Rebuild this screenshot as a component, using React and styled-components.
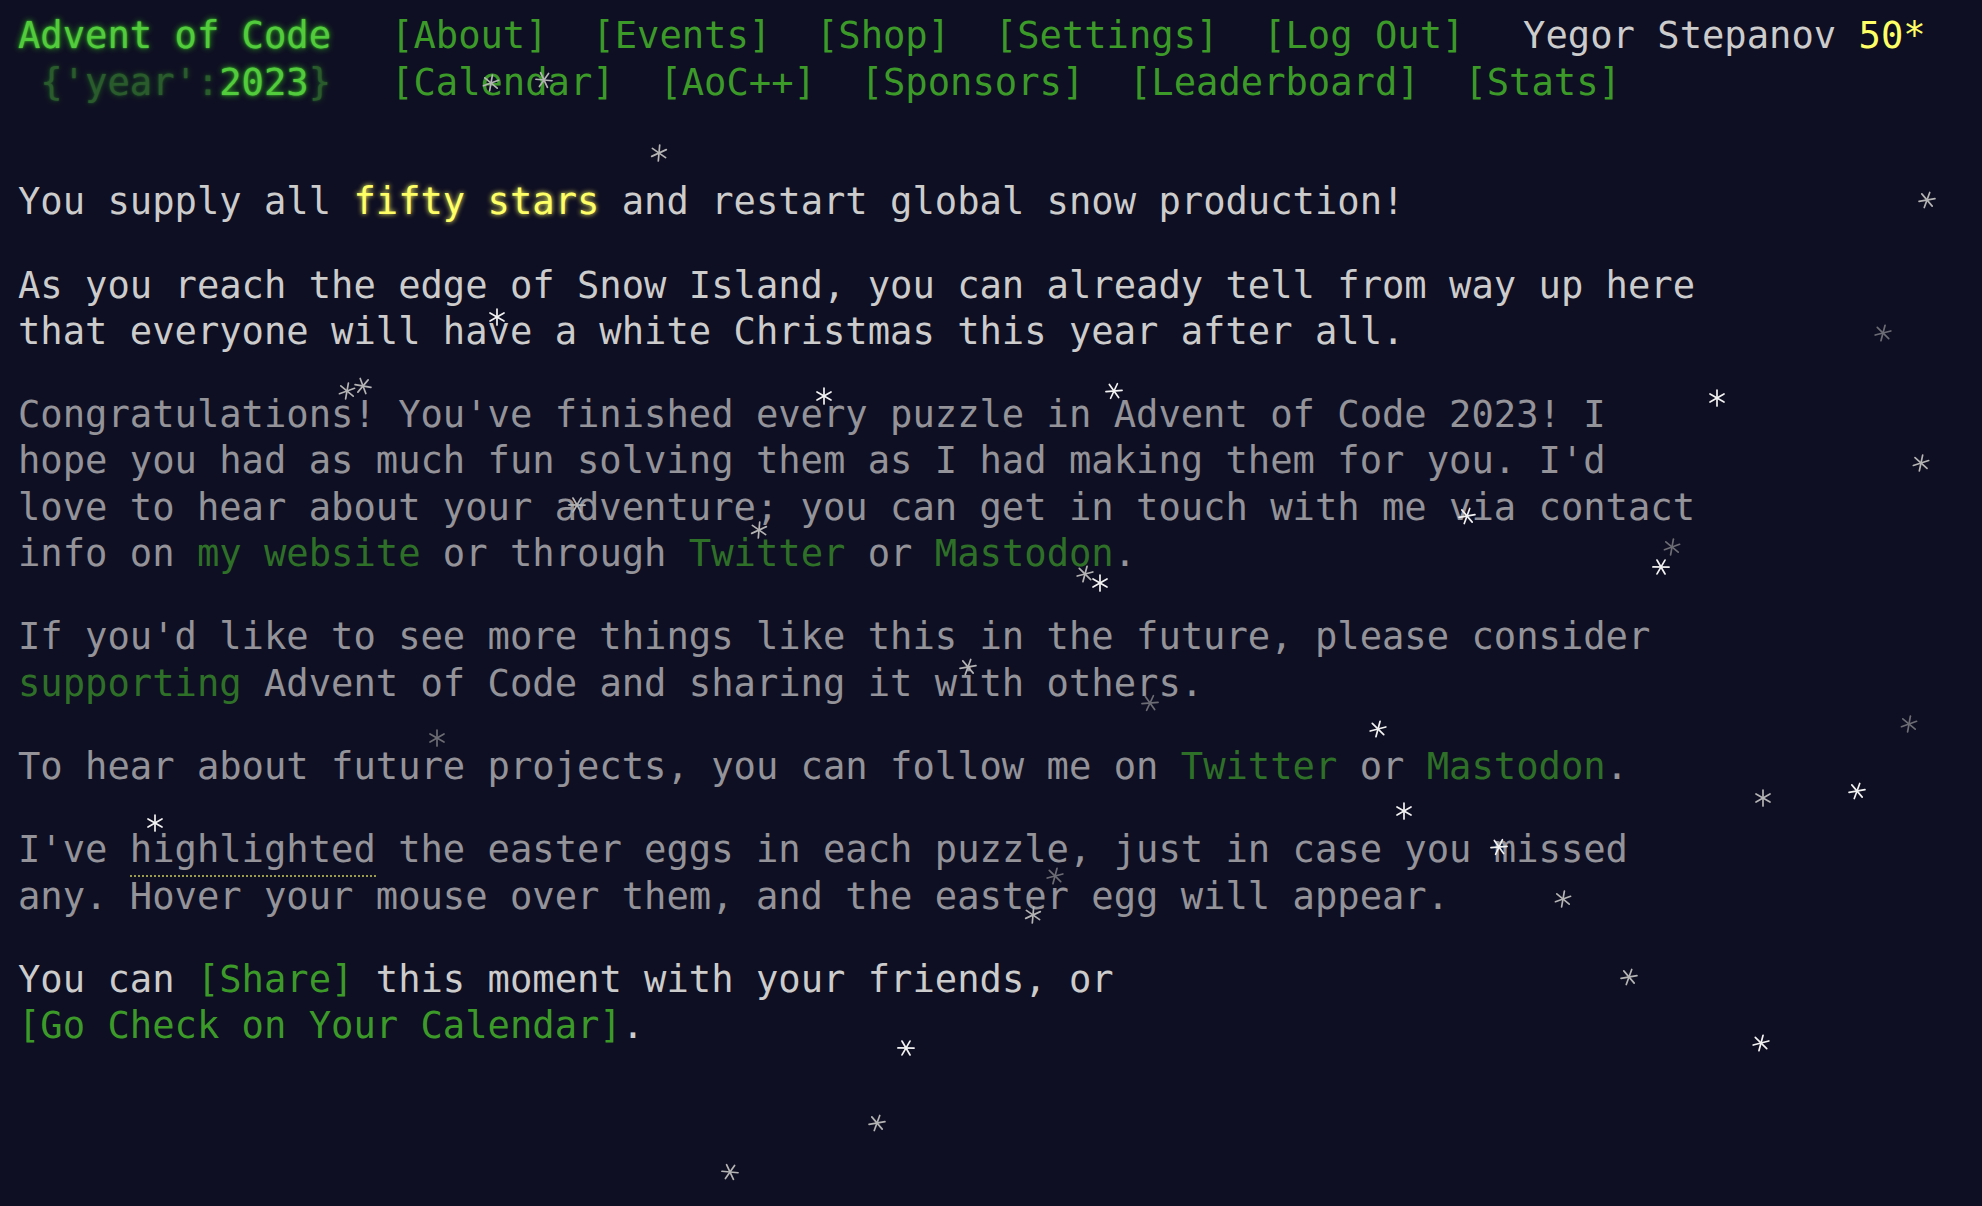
import React from "react";
import styled, { createGlobalStyle } from "styled-components";

const GlobalStyle = createGlobalStyle`
  html, body {
    margin: 0;
    background: #0f0f23;
  }
  body {
    font-family: "DejaVu Sans Mono", "Liberation Mono", monospace;
    font-size: 37.15px;
    color: #cccccc;
  }
`;

const SNOW = [
  [491, 83, "g", 10], [544, 80, "g", 35], [659, 153, "g", 5],
  [1927, 200, "g", 20], [497, 317, "w", 0], [1883, 333, "d", 15],
  [347, 391, "g", 10], [363, 386, "g", 40], [824, 396, "w", 0],
  [1114, 391, "w", 25], [1717, 398, "w", 0], [1921, 463, "g", 12],
  [577, 505, "g", 30], [759, 530, "g", 5], [1467, 516, "w", 20],
  [1672, 547, "d", 10], [1661, 567, "w", 30], [1085, 574, "g", 15],
  [1100, 583, "w", 0], [968, 667, "g", 20], [1150, 703, "d", 25],
  [437, 738, "d", 0], [1378, 729, "w", 15], [1909, 724, "d", 10],
  [1763, 798, "g", 0], [1857, 791, "w", 20], [1404, 811, "w", 0],
  [155, 823, "w", 0], [1499, 847, "w", 25], [1055, 876, "d", 15],
  [1033, 915, "g", 5], [1563, 899, "g", 10], [1629, 977, "g", 20],
  [906, 1048, "w", 30], [1761, 1043, "w", 15], [877, 1123, "g", 20],
  [730, 1172, "g", 35],
];

const SNOW_TONE = { w: "#f2f2f2", g: "#b4b4b4", d: "#6c6c74" };

const Flake = ({ x, y, tone, turn }) => (
  <FlakeBox style={{ left: x - 9, top: y - 9 }}>
    <svg width="18" height="18" viewBox="-9 -9 18 18">
      <g
        stroke={SNOW_TONE[tone]}
        strokeWidth="1.7"
        strokeLinecap="round"
        transform={`rotate(${turn})`}
      >
        <line x1="0" y1="-8" x2="0" y2="8" />
        <line x1="-7" y1="-4" x2="7" y2="4" />
        <line x1="-7" y1="4" x2="7" y2="-4" />
      </g>
    </svg>
  </FlakeBox>
);

const App = () => {
  return (
    <Page>
      <GlobalStyle />
      <Header>
        <Title>Advent of Code</Title>
        <Nav>
          <NavLink href="#">[About]</NavLink>
          <NavLink href="#">[Events]</NavLink>
          <NavLink href="#">[Shop]</NavLink>
          <NavLink href="#">[Settings]</NavLink>
          <NavLink href="#">[Log Out]</NavLink>
          <User>
            Yegor Stepanov <StarCount>50*</StarCount>
          </User>
        </Nav>
        <Title $end>
          <Faded>{"{'year':"}</Faded>2023<Faded>{"}"}</Faded>
        </Title>
        <Nav>
          <NavLink href="#">[Calendar]</NavLink>
          <NavLink href="#">[AoC++]</NavLink>
          <NavLink href="#">[Sponsors]</NavLink>
          <NavLink href="#">[Leaderboard]</NavLink>
          <NavLink href="#">[Stats]</NavLink>
        </Nav>
      </Header>

      <Main>
        <P>
          You supply all <Glow>fifty stars</Glow> and restart global snow
          production!
        </P>
        <P>
          As you reach the edge of Snow Island, you can already tell from way
          up here that everyone will have a white Christmas this year after
          all.
        </P>
        <P $dim>
          Congratulations! You've finished every puzzle in Advent of Code 2023!
          I hope you had as much fun solving them as I had making them for you.
          I'd love to hear about your adventure; you can get in touch with me
          via contact info on <Link href="#">my website</Link> or through{" "}
          <Link href="#">Twitter</Link> or <Link href="#">Mastodon</Link>.
        </P>
        <P $dim>
          If you'd like to see more things like this in the future, please
          consider <Link href="#">supporting</Link> Advent of Code and sharing
          it with others.
        </P>
        <P $dim>
          To hear about future projects, you can follow me on{" "}
          <Link href="#">Twitter</Link> or <Link href="#">Mastodon</Link>.
        </P>
        <P $dim>
          I've <Egg title="Hover">highlighted</Egg> the easter eggs in each
          puzzle, just in case you missed any. Hover your mouse over them, and
          the easter egg will appear.
        </P>
        <P>
          You can <Link href="#">[Share]</Link> this moment with your friends,
          or <Link href="#" $nowrap>[Go Check on Your Calendar]</Link>.
        </P>
      </Main>

      <Snow>
        {SNOW.map(([x, y, tone, turn], i) => (
          <Flake key={i} x={x} y={y} tone={tone} turn={turn} />
        ))}
      </Snow>
    </Page>
  );
};

const Page = styled.div`
  position: relative;
  min-height: 100vh;
  box-sizing: border-box;
  padding: 13px 18px 0;
  overflow: hidden;
`;

const Header = styled.header`
  display: grid;
  grid-template-columns: auto 1fr;
  column-gap: 60px;
  line-height: 46.5px;
  white-space: pre;
`;

const Title = styled.h1`
  margin: 0;
  font-size: inherit;
  font-weight: normal;
  justify-self: ${({ $end }) => ($end ? "end" : "start")};
  color: #52cc3c;
  text-shadow: 0 0 2px #3fbf2a, 0 0 6px #2fae1e;
`;

const Faded = styled.span`
  opacity: 0.4;
`;

const Nav = styled.nav`
  display: flex;
  gap: 2ch;
`;

const NavLink = styled.a`
  color: #3c9a29;
  text-decoration: none;
`;

const User = styled.span`
  margin-left: 14px;
  color: #cccccc;
`;

const StarCount = styled.span`
  color: #ffff66;
`;

const Main = styled.main`
  padding-top: 36px;
  width: 75.5ch;
`;

const P = styled.p`
  margin: 1em 0;
  line-height: 1.245;
  opacity: ${({ $dim }) => ($dim ? 0.7 : 1)};
`;

const Glow = styled.em`
  font-style: normal;
  color: #ffff66;
  text-shadow: 0 0 5px #ffff66;
`;

const Link = styled.a`
  color: #3c9a29;
  text-decoration: none;
  white-space: ${({ $nowrap }) => ($nowrap ? "nowrap" : "normal")};
`;

const Egg = styled.span`
  padding-bottom: 4px;
  border-bottom: 2px dotted #d8d860;
`;

const Snow = styled.div`
  position: absolute;
  inset: 0;
  pointer-events: none;
`;

const FlakeBox = styled.div`
  position: absolute;
  width: 18px;
  height: 18px;
  line-height: 0;
`;

export default App;
